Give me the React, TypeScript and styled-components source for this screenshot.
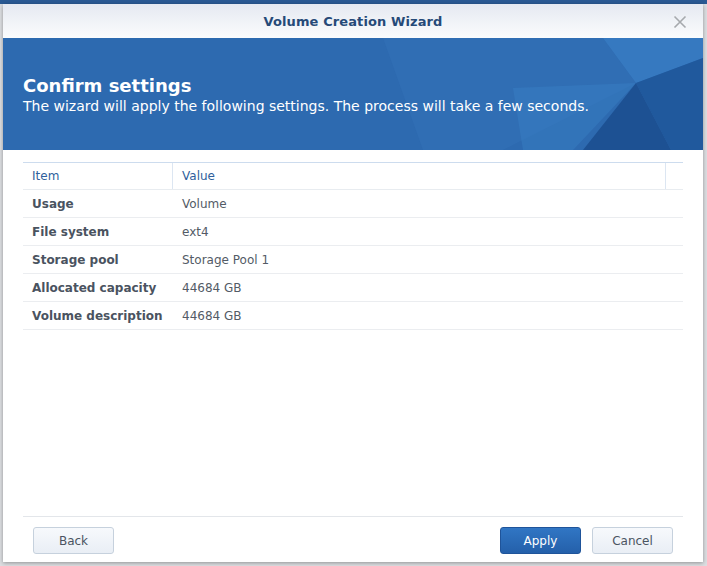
import React from "react";
import styled, { createGlobalStyle } from "styled-components";

const GlobalStyle = createGlobalStyle`
  html, body { margin: 0; padding: 0; }
  body {
    font-family: "DejaVu Sans", Verdana, sans-serif;
    background: #d6d8db;
    width: 707px;
    height: 566px;
    overflow: hidden;
  }
`;

const Backdrop = styled.div`
  width: 707px;
  height: 566px;
  box-sizing: border-box;
  padding: 4px 4px 0 3px;
  background: linear-gradient(to bottom, #2a5a94 0, #2a5a94 4px, #dcdee1 4px);
`;

const Dialog = styled.div`
  width: 700px;
  height: 558px;
  background: #ffffff;
  display: flex;
  flex-direction: column;
  box-shadow: 0 1px 4px rgba(0, 0, 0, 0.35);
`;

const TitleBar = styled.div`
  height: 34px;
  flex: none;
  display: flex;
  align-items: center;
  justify-content: center;
  position: relative;
  background: linear-gradient(to bottom, #e5e9f1, #fbfcfd);
`;

const Title = styled.div`
  font-size: 13px;
  font-weight: bold;
  color: #264a78;
  letter-spacing: 0.1px;
`;

const CloseButton = styled.button`
  position: absolute;
  right: 16px;
  top: 10px;
  width: 15px;
  height: 15px;
  padding: 0;
  border: none;
  background: none;
  display: flex;
  align-items: center;
  justify-content: center;
`;

const Banner = styled.div`
  height: 112px;
  flex: none;
  position: relative;
  background: #2d6ab0;
  overflow: hidden;
  display: flex;
  flex-direction: column;
  justify-content: center;
  padding: 2px 20px 0;
  box-sizing: border-box;
`;

const BannerArt = styled.svg`
  position: absolute;
  inset: 0;
  width: 100%;
  height: 100%;
`;

const BannerTitle = styled.div`
  position: relative;
  font-size: 18px;
  font-weight: bold;
  color: #ffffff;
  line-height: 22px;
`;

const BannerText = styled.div`
  position: relative;
  font-size: 14px;
  color: #ffffff;
  line-height: 18px;
`;

const Content = styled.div`
  flex: 1;
  padding: 12px 20px 0 20px;
`;

const Table = styled.div`
  display: flex;
  flex-direction: column;
`;

const HeaderRow = styled.div`
  display: grid;
  grid-template-columns: 150px 1fr 17px;
  height: 26px;
  border-top: 1px solid #cddcee;
  border-bottom: 1px solid #e8ecf0;
`;

const HeaderCell = styled.div<{ $divider?: boolean }>`
  display: flex;
  align-items: center;
  padding-left: 9px;
  font-size: 12px;
  color: #2f5f9c;
  border-right: ${(p) => (p.$divider ? "1px solid #dce6f2" : "none")};
`;

const Row = styled.div`
  display: grid;
  grid-template-columns: 150px 1fr;
  height: 27px;
  border-bottom: 1px solid #ebedf0;
`;

const LabelCell = styled.div`
  display: flex;
  align-items: center;
  padding-left: 9px;
  font-size: 12px;
  font-weight: bold;
  color: #4a5360;
`;

const ValueCell = styled.div`
  display: flex;
  align-items: center;
  padding-left: 9px;
  font-size: 12px;
  color: #535b66;
`;

const Footer = styled.div`
  flex: none;
  box-sizing: border-box;
  margin: 0 20px;
  border-top: 1px solid #e3e6ea;
  height: 46px;
  display: flex;
  align-items: flex-start;
  padding: 10px 10px 0;
  gap: 11px;
`;

const Spacer = styled.div`
  flex: 1;
`;

const Button = styled.button<{ $primary?: boolean }>`
  width: 81px;
  height: 27px;
  border-radius: 3px;
  font-family: "DejaVu Sans", Verdana, sans-serif;
  font-size: 12px;
  cursor: pointer;
  border: 1px solid ${(p) => (p.$primary ? "#1f549a" : "#c6d1dd")};
  color: ${(p) => (p.$primary ? "#ffffff" : "#4b5461")};
  background: ${(p) =>
    p.$primary
      ? "linear-gradient(to bottom, #3176c4, #2460aa)"
      : "linear-gradient(to bottom, #f7f9fc, #e9eef5)"};
`;

const rows: [string, string][] = [
  ["Usage", "Volume"],
  ["File system", "ext4"],
  ["Storage pool", "Storage Pool 1"],
  ["Allocated capacity", "44684 GB"],
  ["Volume description", "44684 GB"],
];

export default function App() {
  return (
    <>
      <GlobalStyle />
      <Backdrop>
        <Dialog>
          <TitleBar>
            <Title>Volume Creation Wizard</Title>
            <CloseButton aria-label="Close">
              <svg width="14" height="14" viewBox="0 0 14 14">
                <path d="M1.5 1.5 L12.5 12.5 M12.5 1.5 L1.5 12.5" stroke="#a6a9ad" strokeWidth="1.6" />
              </svg>
            </CloseButton>
          </TitleBar>
          <Banner>
            <BannerArt viewBox="0 0 700 112" preserveAspectRatio="none">
              <polygon points="380,0 600,0 633,45 500,112 420,112" fill="#3471b7" opacity="0.5" />
              <polygon points="510,50 633,45 570,112 520,112" fill="#3a80c6" opacity="0.45" />
              <polygon points="600,0 700,0 700,20 633,45" fill="#3a7fc5" opacity="0.75" />
              <polygon points="633,45 700,20 700,112 668,112" fill="#20599d" />
              <polygon points="633,45 668,112 580,112" fill="#1d5193" />
            </BannerArt>
            <BannerTitle>Confirm settings</BannerTitle>
            <BannerText>The wizard will apply the following settings. The process will take a few seconds.</BannerText>
          </Banner>
          <Content>
            <Table>
              <HeaderRow>
                <HeaderCell $divider>Item</HeaderCell>
                <HeaderCell $divider>Value</HeaderCell>
                <HeaderCell />
              </HeaderRow>
              {rows.map(([k, v]) => (
                <Row key={k}>
                  <LabelCell>{k}</LabelCell>
                  <ValueCell>{v}</ValueCell>
                </Row>
              ))}
            </Table>
          </Content>
          <Footer>
            <Button>Back</Button>
            <Spacer />
            <Button $primary>Apply</Button>
            <Button>Cancel</Button>
          </Footer>
        </Dialog>
      </Backdrop>
    </>
  );
}
